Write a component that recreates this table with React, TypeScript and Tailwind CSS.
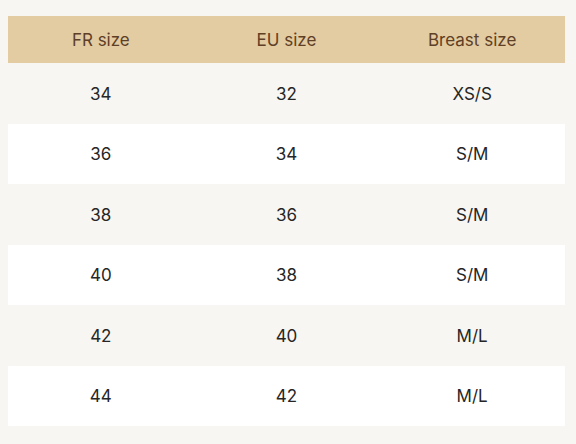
const ROWS: [string, string, string][] = [
  ['34', '32', 'XS/S'],
  ['36', '34', 'S/M'],
  ['38', '36', 'S/M'],
  ['40', '38', 'S/M'],
  ['42', '40', 'M/L'],
  ['44', '42', 'M/L'],
]

export default function App() {
  return (
    <div className="min-h-[444px] w-[576px] bg-[#f7f6f3] px-2 pt-4 font-['Inter',sans-serif]">
      <div className="w-[557px]">
        <div className="grid h-[47px] grid-cols-3 items-center bg-[#e3cba2] pt-[2px] text-center text-[17px] text-[#5e4026]">
          <div>FR size</div>
          <div>EU size</div>
          <div>Breast size</div>
        </div>
        {ROWS.map((r, i) => (
          <div
            key={i}
            className={`grid h-[60.5px] grid-cols-3 items-center pt-[2px] text-center text-[17px] text-[#262626] ${i % 2 ? 'bg-white' : 'bg-[#f7f6f3]'}`}
          >
            {r.map((c, j) => (
              <div key={j}>{c}</div>
            ))}
          </div>
        ))}
      </div>
    </div>
  )
}
